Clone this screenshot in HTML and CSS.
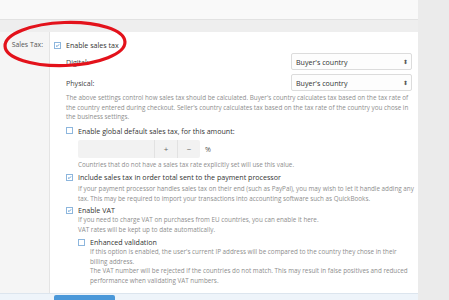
FILE: index.html
```html
<!DOCTYPE html>
<html lang="en">
<head>
  <meta charset="UTF-8">
  <title>Sales Tax Settings</title>
  <link rel="stylesheet" href="styles.css">
</head>
<body>
  <div class="page">
    <div class="main">
      <div class="topbar"></div>
      <div class="gap"></div>

      <!-- sales tax form row -->
      <div class="form-row">
        <div class="row-label">Sales Tax:</div>
        <div class="row-body">
          <label class="check first">
            <span class="box on"><svg viewBox="0 0 8 8"><path d="M1.6 4.1 L3.3 5.7 L6.5 2.2" /></svg></span>
            <span class="check-text">Enable sales tax</span>
          </label>

          <div class="indent">
            <div class="select-row">
              <span class="sub-label">Digital:</span>
              <div class="select">Buyer's country<span class="arrows">&#x2B0D;</span></div>
            </div>
            <div class="select-row">
              <span class="sub-label">Physical:</span>
              <div class="select">Buyer's country<span class="arrows">&#x2B0D;</span></div>
            </div>
            <p class="hint narrow">The above settings control how sales tax should be calculated. Buyer's country calculates tax based on the tax rate of the country entered during checkout. Seller's country calculates tax based on the tax rate of the country you chose in the business settings.</p>

            <label class="check loose">
              <span class="box"></span>
              <span class="check-text">Enable global default sales tax, for this amount:</span>
            </label>
            <div class="indent">
              <div class="number-row">
                <div class="number">
                  <span class="number-input"></span>
                  <span class="number-btn">+</span>
                  <span class="number-btn">&minus;</span>
                </div>
                <span class="unit">%</span>
              </div>
              <p class="hint">Countries that do not have a sales tax rate explicitly set will use this value.</p>
            </div>

            <label class="check">
              <span class="box on"><svg viewBox="0 0 8 8"><path d="M1.6 4.1 L3.3 5.7 L6.5 2.2" /></svg></span>
              <span class="check-text">Include sales tax in order total sent to the payment processor</span>
            </label>
            <div class="indent">
              <p class="hint wide">If your payment processor handles sales tax on their end (such as PayPal), you may wish to let it handle adding any tax. This may be required to import your transactions into accounting software such as QuickBooks.</p>
            </div>

            <label class="check tight">
              <span class="box on"><svg viewBox="0 0 8 8"><path d="M1.6 4.1 L3.3 5.7 L6.5 2.2" /></svg></span>
              <span class="check-text">Enable VAT</span>
            </label>
            <div class="indent">
              <p class="hint flush">If you need to charge VAT on purchases from EU countries, you can enable it here.<br>VAT rates will be kept up to date automatically.</p>
              <label class="check">
                <span class="box"></span>
                <span class="check-text">Enhanced validation</span>
              </label>
              <div class="indent">
                <p class="hint flush">If this option is enabled, the user's current IP address will be compared to the country they chose in their billing address.<br>The VAT number will be rejected if the countries do not match. This may result in false positives and reduced performance when validating VAT numbers.</p>
              </div>
            </div>
          </div>
        </div>
      </div>

      <div class="footer">
        <span class="save-btn"></span>
      </div>
    </div>
    <div class="side"></div>

    <!-- red highlight ring -->
    <svg class="ring" width="132" height="52" viewBox="0 0 132 52">
      <ellipse cx="64" cy="24" rx="60" ry="21.5" transform="rotate(-2 64 24)" />
    </svg>
  </div>
</body>
</html>
```

FILE: styles.css
```css
* {
  box-sizing: border-box;
  margin: 0;
  padding: 0;
}
body {
  width: 449px;
  height: 300px;
  overflow: hidden;
  font-family: "Open Sans", "Noto Sans", sans-serif;
  color: #333;
}
.page {
  position: relative;
  display: flex;
  height: 300px;
}
.main {
  width: 418px;
  display: flex;
  flex-direction: column;
}
.side {
  flex: 1;
  background: #ebebeb;
}

/* top area */
.topbar {
  flex-shrink: 0;
  height: 20px;
  background: #f9f9f9;
  border-bottom: 1px solid #e2e2e2;
}
.gap {
  flex-shrink: 0;
  height: 12px;
  background: #eeeeee;
}

/* form row */
.form-row {
  flex-shrink: 0;
  display: flex;
  height: 261px;
}
.row-label {
  width: 49px;
  background: #f5f5f5;
  font-size: 6.9px;
  line-height: 10px;
  color: #555;
  text-align: right;
  padding: 8px 6px 0 0;
}
.row-body {
  flex: 1;
  background: #fff;
  border-left: 1px solid #e4e4e4;
  padding: 8px 5px 0 4px;
}
.indent {
  padding-left: 12px;
}

/* checkboxes */
.check {
  display: flex;
  align-items: center;
  gap: 5px;
  height: 10px;
  margin-top: 3px;
}
.check.first {
  margin-top: 0;
}
.check.loose {
  margin-top: 4px;
}
.check.tight {
  margin-top: 2px;
}
.box {
  width: 7px;
  height: 7px;
  border: 1px solid #8db6dd;
  background: #fff;
  flex-shrink: 0;
}
.box svg {
  display: block;
  width: 5px;
  height: 5px;
  fill: none;
  stroke: #3d86c9;
  stroke-width: 1.3;
}
.check-text {
  font-size: 7.1px;
  color: #333;
}

/* selects */
.select-row {
  display: flex;
  justify-content: space-between;
  align-items: center;
  height: 17px;
  margin-top: 3px;
}
.select-row + .select-row {
  margin-top: 4px;
}
.sub-label {
  font-size: 7.1px;
  color: #444;
}
.select {
  width: 121px;
  height: 17px;
  margin-right: 1px;
  border: 1px solid #dcdcdc;
  border-radius: 2px;
  background: #fdfdfd;
  font-size: 7.1px;
  color: #333;
  display: flex;
  align-items: center;
  justify-content: space-between;
  padding: 0 3px 0 4px;
}
.arrows {
  font-size: 6px;
  color: #555;
}

/* hints */
.hint {
  font-size: 6.3px;
  line-height: 9.5px;
  color: #8e8e8e;
  margin-top: 2px;
}
.hint.flush {
  margin-top: 0;
}
.hint.narrow {
  margin-right: 4px;
}
.hint.wide {
  margin-right: -7px;
}

/* number input */
.number-row {
  display: flex;
  align-items: center;
  gap: 5px;
  margin-top: 4px;
}
.number {
  display: flex;
  height: 18px;
  width: 122px;
  background: #f2f2f2;
  border-radius: 2px;
}
.number-input {
  flex: 1;
}
.number-btn {
  width: 23px;
  border-left: 1px solid #e2e2e2;
  display: flex;
  align-items: center;
  justify-content: center;
  font-size: 8px;
  color: #666;
}
.unit {
  font-size: 7.1px;
  color: #555;
}

/* footer */
.footer {
  height: 7px;
  overflow: hidden;
  background: #eef4fa;
  border-top: 1px solid #dce5ee;
  padding: 1px 0 0 54px;
}
.save-btn {
  display: block;
  width: 61px;
  height: 10px;
  background: #4b98d9;
  border-radius: 2px 2px 0 0;
}

/* highlight */
.ring {
  position: absolute;
  left: 1px;
  top: 20px;
}
.ring ellipse {
  fill: none;
  stroke: #e3121b;
  stroke-width: 3.2;
}
```
